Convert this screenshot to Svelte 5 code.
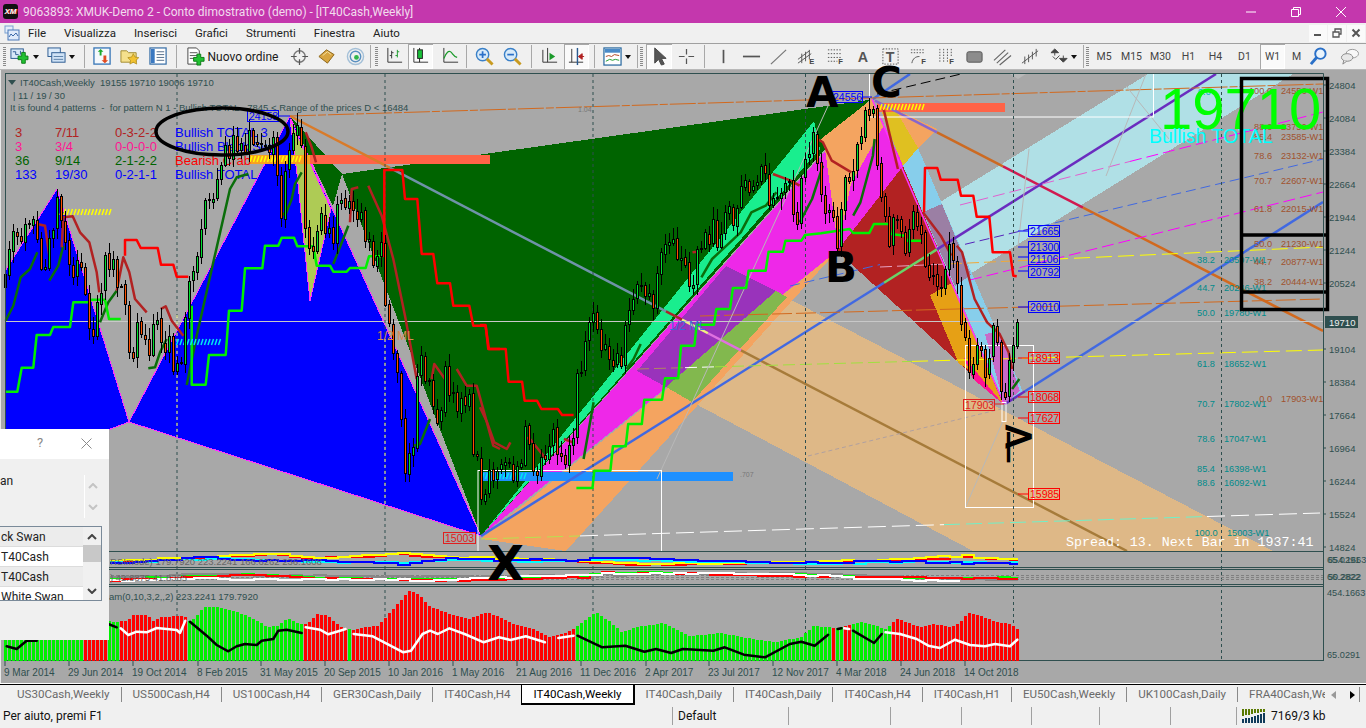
<script>
  const z8 = (a) => a.map(([x, y]) => [x / 3, 110 + y / 3]);
  const z9 = (a) => a.map(([x, y]) => [480 + x / 2.8, 90 + y / 3]);
  const z10 = (a) => a.map(([x, y]) => [800 + x / 3, 70 + y / 3]);
  const z11 = (a) => a.map(([x, y]) => [x / 3, 560 + y / 3]);
  const z7 = (a) => a.map(([x, y]) => [300 + x / 2.613, 540 + y / 3]);
  const z6 = (a) => a.map(([x, y]) => [900 + x / 3, 540 + y / 3]);
  const P = (a) => a.map((p) => p[0].toFixed(1) + ',' + p[1].toFixed(1)).join(' ');
  const lerp = (tab, x) => {
    if (x <= tab[0][0]) return tab[0][1];
    for (let i = 1; i < tab.length; i++) {
      if (x <= tab[i][0]) {
        const [a, b] = tab[i - 1], [c, d] = tab[i];
        return b + ((d - b) * (x - a)) / (c - a);
      }
    }
    return tab[tab.length - 1][1];
  };
  let seed = 77;
  const rnd = () => ((seed = (seed * 16807) % 2147483647) / 2147483647);
  const stepify = (p) => {
    const out = [];
    const end = p[p.length - 1][0];
    for (let x = p[0][0]; x < end; x += 12) {
      const y = Math.round(lerp(p, x) + (rnd() - 0.5) * 1.5);
      out.push([x, y], [Math.min(x + 12, end), y]);
    }
    return out;
  };

  const path = [
    ...z8([[17,540],[50,320],[60,380],[100,370],[125,460],[135,530],[160,320],[172,280],[195,380],[220,460],[250,480],[270,640],[290,640],[315,450],[330,450],[365,550],[378,640],[388,770],[400,710],[412,630],[425,680],[440,700],[448,720],[470,600],[485,680],[497,770],[510,700],[533,800],[545,760],[557,580],[570,540],[592,470],[605,380],[617,310],[640,230],[650,180],[700,90],[760,100],[820,100],[832,240],[845,300],[860,100],[890,90],[905,70],[917,360],[930,440],[950,350],[1000,370],[1020,270],[1060,280],[1085,300],[1110,440],[1135,400],[1145,400],[1157,610],[1170,680],[1193,780],[1205,970],[1217,1080],[1240,990],[1252,840],[1265,740],[1290,830],[1312,950],[1337,780],[1360,890],[1385,910],[1408,850],[1420,990],[1432,1040],[1445,1190]]),
    [487,490],[501,457],[516,480],[526,440],[534,480],[548,443],[557,440],[566,470],[573,447],[577,383],[582,357],[586,340],[594,323],[601,337],[614,360],[621,373],[626,327],[634,303],[641,287],[646,287],[653,320],[657,290],[661,240],[669,233],[677,267],[685,267],[694,280],[701,240],[709,253],[713,223],[717,243],[726,227],[737,207],[744,187],[757,193],[766,170],[773,213],[785,183],[798,220],[805,150],[814,133],[818,162],[821,203],[832,217],[837,240],[844,183],[853,177],[857,157],[866,123],[873,110],[877,147],[882,190],[889,247],[896,207],[905,240],[914,223],[923,240],[929,287],[938,283],[944,277],[950,237],[953,243],[957,283],[961,330],[969,367],[976,343],[985,367],[993,330],[1001,373],[1005,403],[1009,370],[1013,353],[1017,323]
  ];
  const candles = [];
  let prev = lerp(path, 2);
  for (let k = 0; k <= 253; k++) {
    const x = 4 + 4 * k;
    const close = k === 253 ? 323 : lerp(path, x + 1.5) + (rnd() - 0.5) * 30;
    let open = k === 253 ? 347 : prev + (rnd() - 0.5) * 4;
    const top = Math.min(open, close), bot = Math.max(open, close);
    const up = close < open;
    candles.push({ x, y: Math.round(top), h: Math.max(1, Math.round(bot - top)), hi: Math.round(top - 2 - rnd() * 10), lo: Math.round(bot + 2 + rnd() * 10), up });
    prev = close;
  }

  const env = [[0,625],[83,622],[108,622],[113,623],[127,622],[133,616],[147,616],[153,622],[160,618],[180,617],[185,618],[190,623],[204,608],[217,608],[233,612],[250,618],[267,628],[277,627],[287,619],[300,625],[307,625],[317,615],[328,617],[340,628],[353,631],[367,628],[377,627],[383,621],[400,602],[409,592],[418,595],[430,608],[453,616],[468,620],[487,613],[514,625],[530,629],[549,638],[568,633],[577,627],[595,613],[610,623],[621,633],[637,628],[664,624],[690,637],[721,634],[752,640],[775,643],[801,638],[813,627],[836,629],[863,623],[885,630],[897,620],[920,628],[933,625],[950,628],[958,625],[968,614],[977,616],[997,623],[1010,625],[1019,632]];
  const zones = [[83,'g'],[108,'r'],[119,'g'],[187,'r'],[303,'g'],[347,'r'],[352,'g'],[575,'r'],[832,'g'],[836,'r'],[844,'g'],[851,'r'],[889,'g'],[1022,'r']];
  const hist = [];
  for (let k = 0; k <= 253; k++) {
    const x = 4 + 4 * k;
    const y = Math.round(lerp(env, x + 1));
    const z = zones.find((t) => x < t[0]);
    hist.push({ x, y, h: 662 - y, c: z[1] === 'g' ? '#00f000' : '#ff0000' });
  }
  const curves = [
    { c: '#000', p: z11([[20,262],[50,270],[80,245],[110,245]]) },
    { c: '#000', p: z11([[325,195],[350,205]]) },
    { c: '#fff', p: z11([[362,208],[385,228],[410,218],[440,220],[470,207],[530,213],[540,222],[556,185]]) },
    { c: '#000', p: z11([[570,188],[620,230],[650,258],[685,277],[710,262],[735,255],[770,258],[785,245],[820,240],[835,215],[860,212],[905,222]]) },
    { c: '#fff', p: z11([[917,205],[960,212],[985,226],[1010,218],[1037,210]]) },
    { c: '#fff', p: z7([[140,285],[190,292],[270,340],[290,335],[320,285],[340,275],[360,285],[390,268],[430,285],[480,310],[520,295],[550,303],[590,292],[640,310]]) },
    { c: '#fff', p: z7([[675,297],[715,290]]) },
    { c: '#000', p: z7([[725,290],[790,325],[850,320],[900,338],[930,330],[970,342],[1000,330],[1080,335],[1110,325],[1160,347],[1215,355],[1280,315],[1310,308],[1345,320],[1380,287]]) },
    { c: '#000', p: z7([[1405,270],[1415,268]]) },
    { c: '#fff', p: z7([[1422,268],[1435,270]]) },
    { c: '#000', p: z7([[1445,275],[1500,312],[1520,285]]) },
    { c: '#fff', p: z7([[1530,280],[1568,285]]) },
    { c: '#fff', p: z6([[0,285],[50,300],[85,320],[120,327],[165,302],[210,318],[255,322],[285,315],[330,322],[352,302]]) }
  ];

  const darkRed = [
    z8([[112,345],[135,350],[148,440]]), z8([[185,415],[190,325],[218,322],[240,370],[268,400],[290,490],[298,550]]),
    z8([[350,545],[370,445],[388,490],[405,570],[440,610]]), z8([[482,600],[497,592],[515,635],[550,680]]),
    z8([[917,70],[935,115],[948,160]]), z8([[1105,230],[1145,320],[1180,450],[1215,620],[1250,810]]),
    z8([[1295,810],[1303,765],[1335,810]]), z8([[1370,780],[1400,830],[1430,830],[1480,1010],[1500,1020]]),
    z8([[1050,340],[1055,240],[1075,235]]), z9([[0,955],[20,1000],[40,1060],[75,1080],[85,1060]]),
    z9([[125,1045],[140,1050],[185,1110]]), z9([[235,1050],[260,1060]]), z9([[595,490],[610,488]]),
    z9([[820,255],[870,275],[895,290]]), z9([[945,150],[960,160],[985,215],[1040,250]]), z9([[1130,60],[1170,240]]),
    z9([[1240,370],[1290,440],[1320,500]]), z9([[1335,470],[1350,490],[1385,630],[1420,700],[1455,735],[1480,790],[1490,840]])
  ];
  const darkGreen = [
    z8([[17,635],[40,590],[62,505],[90,480],[112,430]]), z8([[148,515],[175,470],[190,410]]), z8([[300,640],[325,580],[350,545]]),
    z8([[445,778],[465,775],[480,730],[500,690]]), z8([[560,828],[590,680],[640,460],[690,240],[710,205],[745,195]]),
    z8([[845,310],[855,320],[875,270],[885,225],[905,190]]), z8([[1000,465],[1045,350]]), z8([[1240,1010],[1260,1005],[1290,930]]),
    z9([[290,1110],[305,1020],[318,940]]), z9([[410,840],[430,810],[450,765]]),
    z9([[620,565],[650,510],[700,460],[730,430],[760,370],[800,350],[830,310]]), z9([[895,400],[930,330],[960,230]]),
    z9([[1045,380],[1065,340],[1100,200],[1105,150]]), z9([[1490,900],[1510,870]])
  ];
  const redSteps = [
    z8([[1153,445],[1153,183],[1207,183],[1215,270],[1252,270],[1265,435],[1300,435],[1312,523],[1350,523],[1360,590],[1408,590],[1420,650],[1457,650],[1465,720],[1500,720]]),
    z9([[0,708],[15,708],[25,780],[72,780],[80,878],[118,878],[125,935],[160,935],[172,960],[218,960],[230,978],[262,978]]),
    z8([[375,440],[375,393],[410,393],[422,417],[473,417],[483,467],[520,467],[530,503],[565,503]]),
    z10([[372,430],[375,297],[412,297],[422,332],[473,332],[483,380],[520,380],[530,443],[568,443],[578,550],[630,550],[640,620],[650,622]])
  ];
  const greenSteps = [
    z8([[15,848],[52,848],[65,776],[100,776],[110,678],[150,678],[160,654],[210,654],[220,580],[265,580],[275,572],[315,572],[327,630],[362,630]]),
    z8([[575,590],[575,827],[617,827],[627,738],[677,738],[687,605],[725,605],[735,478],[787,478],[795,410],[835,410],[845,386],[882,386],[892,412],[940,412],[950,470],[990,470],[1000,488],[1040,488],[1050,477],[1097,477],[1107,442],[1145,442]]),
    z9([[270,1197],[315,1197],[320,1145],[365,1145],[372,1072],[408,1072],[415,1005],[453,1005],[460,932],[510,932],[518,868],[555,868],[563,770],[600,770],[607,707],[655,707],[662,660],[700,660],[708,597],[745,597],[752,545],[800,545],[808,488],[848,488],[855,455],[900,455],[910,438],[955,433],[1035,420],[1045,432],[1090,432],[1103,405],[1145,405],[1150,435],[1190,440],[1195,455],[1235,455]])
  ];

  const hatch = (x1, x2, y, h) => {
    const a = [];
    for (let x = x1; x < x2; x += 3.5) a.push(x);
    return a.map((x) => ({ x, y, h }));
  };

  const fills = [
    { c: '#0000ff', s: '#ff33ff', p: [[5,272],[57,190],[129,423],[5,470]] },
    { c: '#0000ff', s: '#ff33ff', p: [[129,423],[290,117],[481,537]] },
    { c: '#006400', p: [[290,117],[342,175],[333,207],[320,180]] },
    { c: '#006400', p: [[342,175],[869,101],[481,537]] },
    { c: '#aecb55', s: '#ff33ff', p: [[290,120],[297,175],[310,302],[331,210]] },
    { c: '#b0e0e6', p: [[932,208],[1148,75],[1293,75],[957,283]] },
    { c: '#deb887', p: [[726,267],[1273,552],[973,552],[692,403]] },
    { c: '#f4a460', p: [[481,540],[566,552],[837,252]] },
    { c: '#19ee8e', p: [[481,537],[814,122],[820,150]] },
    { c: '#ee28e8', p: [[481,537],[872,100],[905,170],[837,252]] },
    { c: '#f4a460', p: [[821,140],[872,100],[884,126],[851,185],[838,248],[825,150]] },
    { c: '#9933bb', p: [[726,267],[776,292],[666,388],[637,372]] },
    { c: '#82b84e', p: [[776,292],[787,298],[692,403],[666,388]] },
    { c: '#dfc021', p: [[878,104],[900,113],[918,149],[903,167]] },
    { c: '#f4a460', p: [[895,110],[937,130],[918,149]] },
    { c: '#87ceeb', p: [[903,167],[918,149],[1023,393],[1005,405]] },
    { c: '#b22222', p: [[903,167],[837,252],[1004,405],[975,340],[955,290]] },
    { c: '#e6a015', p: [[930,296],[952,284],[1003,405],[972,372],[959,365]] },
    { c: '#ff1493', p: [[963,357],[1003,405],[973,380]] },
    { c: '#9b7fa4', p: [[923,213],[942,205],[971,276],[955,287]] },
    { c: '#c86ac8', p: [[985,335],[1000,332],[1020,392],[1004,405]] }
  ];

  const xAt = (a, b) => (x) => a[1] + ((b[1] - a[1]) * (x - a[0])) / (b[0] - a[0]);
  const seg = (a, b, x1, x2, c, w, d) => {
    const f = xAt(a, b);
    return { x1, y1: f(x1), x2, y2: f(x2), c, w, d };
  };
  const M1 = [[290,117],[1127,552]], M2 = [[872,100],[1323,332]], U1 = [[481,537],[1216,75]];
  const Fb = [[790,287],[1323,160]], Fy = [[637,370],[1323,351]], Fw = [[481,540],[1320,514]];
  const Fm1 = [[960,206],[1323,113]], Fm2 = [[970,281],[1323,193]], Fo = [[290,117],[1323,85]], Fo2 = [[700,317],[1323,300]], Fy2 = [[880,268],[1323,248]];
  const lines = [
    seg(M1[0], M1[1], 290, 390, '#d97b2a', 2.5), seg(M1[0], M1[1], 390, 666, '#6f93a8', 2.5), seg(M1[0], M1[1], 666, 682, '#a52a2a', 2.5),
    seg(M1[0], M1[1], 682, 708, '#f0f080', 2.5), seg(M1[0], M1[1], 708, 741, '#e070e0', 2.5), seg(M1[0], M1[1], 741, 1127, '#a67b3a', 2.5),
    seg(M2[0], M2[1], 875, 937, '#8866cc', 2.5), seg(M2[0], M2[1], 937, 1003, '#cc6a22', 2.5), seg(M2[0], M2[1], 1003, 1083, '#d01a50', 2.5), seg(M2[0], M2[1], 1083, 1323, '#d2691e', 2.5),
    seg(U1[0], U1[1], 481, 884, '#4169e1', 2.5), seg(U1[0], U1[1], 884, 937, '#68d468', 2.5), seg(U1[0], U1[1], 937, 1216, '#6a2cbf', 2.5),
    seg([873,100],[910,75], 873, 910, '#4169e1', 2.5),
    seg([1005,405],[1323,203], 1005, 1025, '#6a2cbf', 2.5), seg([1005,405],[1323,203], 1025, 1323, '#4169e1', 2.5),
    seg(Fb[0], Fb[1], 790, 880, '#4169e1', 1, '10 5'), seg(Fb[0], Fb[1], 965, 1040, '#5522bb', 1, '10 5'), seg(Fb[0], Fb[1], 1040, 1323, '#4169e1', 1, '10 5'),
    seg(Fy[0], Fy[1], 637, 685, '#b08860', 1, '12 5'), seg(Fy[0], Fy[1], 685, 715, '#ffffff', 1, '12 5'), seg(Fy[0], Fy[1], 715, 912, '#a0e040', 1, '12 5'), seg(Fy[0], Fy[1], 912, 1323, '#ffff00', 1, '16 6'),
    seg(Fy2[0], Fy2[1], 880, 950, '#e8a0c0', 1, '12 5'), seg(Fy2[0], Fy2[1], 950, 1030, '#f0a838', 1, '12 5'), seg(Fy2[0], Fy2[1], 1030, 1323, '#ffff00', 1, '16 6'),
    seg(Fw[0], Fw[1], 481, 580, '#b8e050', 1, '16 6'), seg(Fw[0], Fw[1], 580, 944, '#ffffff', 1, '18 6'), seg(Fw[0], Fw[1], 944, 1207, '#70f0c8', 1, '16 6'), seg(Fw[0], Fw[1], 1207, 1320, '#ffffff', 1, '18 6'),
    seg(Fm1[0], Fm1[1], 960, 1130, '#e060d0', 1, '12 5'), seg(Fm1[0], Fm1[1], 1130, 1323, '#ff00ff', 1, '12 5'),
    seg(Fm2[0], Fm2[1], 970, 1323, '#ff00ff', 1, '12 5'),
    seg(Fo[0], Fo[1], 290, 1323, '#d2691e', 1, '26 2 8 2'),
    seg(Fo2[0], Fo2[1], 700, 1323, '#d2691e', 1, '20 4'),
    seg([877,95],[961,75], 877, 961, '#000', 1, '10 5'),
    seg([828,107],[657,480], 657, 828, '#b8b8b8', 1),
    seg([1146,75],[1106,177], 1106, 1146, '#b8b8b8', 1),
    seg([1029,150],[1018,247], 1018, 1029, '#b8b8b8', 1),
    seg([1126,87],[1169,140], 1126, 1169, '#b8b8b8', 1),
    seg([1003,422],[966,507], 966, 1003, '#b8b8b8', 1),
    seg([808,457],[1001,410], 808, 1001, '#b0a0a0', 1, '4 3')
  ];

  const blueLabels = [[21665,226,232],[21300,242,248],[21106,254,258],[20792,267,272],[20010,302,308]];
  const redLabels = [[18913,353,359],[18068,392,398],[17627,413,419],[15985,489,495]];
  const tealFib = [['38.2','20597-W1',264],['44.7','20246-W1',292],['50.0','19780-W1',317],['61.8','18652-W1',368],['70.7','17802-W1',408],['78.6','17047-W1',443],['85.4','16398-W1',473],['88.6','16092-W1',487],['100.0','15003-W1',537]];
  const brownFib = [['100.0','24556-W1',95],['88.6','23750-W1',131],['85.4','23585-W1',141],['78.6','23132-W1',160],['70.7','22607-W1',185],['61.8','22015-W1',213],['50.0','21230-W1',248],['44.7','20877-W1',266],['38.2','20444-W1',286],['0.0','17903-W1',403]];
  const ticks = [[24804,86],[24084,119],[23384,152],[22664,185],[21944,218],[21244,251],[20524,284],[19104,350],[18384,383],[17664,416],[16964,449],[16244,482],[15524,515],[14824,548]];
  const vlines = [177, 385, 593, 805.5, 1013.5, 1221.5];
  const dates = [['9 Mar 2014',4],['29 Jun 2014',68],['19 Oct 2014',132],['8 Feb 2015',197],['31 May 2015',260],['20 Sep 2015',324],['10 Jan 2016',388],['1 May 2016',452],['21 Aug 2016',516],['11 Dec 2016',580],['2 Apr 2017',645],['23 Jul 2017',708],['12 Nov 2017',772],['4 Mar 2018',836],['24 Jun 2018',900],['14 Oct 2018',964]];
  const table = [
    ['3', '7/11', '0-3-2-2', 'Bullish TOTAL 3', 138, '#b22222', '#0000ff'],
    ['3', '3/4', '0-0-0-0', 'Bullish Black Swan', 152, '#ff1493', '#0000ff'],
    ['36', '9/14', '2-1-2-2', 'Bearish Crab', 166, '#006400', '#ff0000'],
    ['133', '19/30', '0-2-1-1', 'Bullish TOTAL', 180, '#0000ff', '#0000ff']
  ];
  const rsi = [
    { c: '#ff0000', p: [[110,563],[180,560],[230,557],[270,555],[300,560],[330,559],[400,555],[450,560],[490,560],[580,563],[640,566],[700,565],[800,564],[900,561],[960,558],[1018,562]] },
    { c: '#ffff00', p: [[110,562],[180,559],[230,556],[270,554],[300,559],[330,558],[400,554],[450,559],[490,559],[580,562],[640,565],[700,564],[800,563],[900,560],[960,557],[1018,561]] },
    { c: '#00ffff', p: [[110,564],[200,560],[250,560],[300,563],[400,564],[440,561],[490,562],[580,562],[600,560],[700,563],[800,565],[900,563],[1018,564]] },
    { c: '#0000ff', p: [[110,565],[200,558],[250,562],[300,561],[400,565],[440,559],[490,561],[580,561],[600,558],[700,562],[800,564],[900,562],[960,564],[1018,565]] }
  ].map((l) => ({ ...l, p: stepify(l.p) }));
  const p2 = [
    { c: '#888888', p: [[110,578],[200,575],[300,577],[400,578],[600,576],[800,574],[1018,582]] },
    { c: '#00ff00', p: [[110,580],[200,577],[250,575],[300,578],[400,580],[490,580],[580,577],[600,573],[700,574],[800,576],[900,579],[1018,579]] },
    { c: '#ff0000', p: [[110,581],[200,578],[250,576],[300,579],[400,581],[490,581],[580,578],[600,574],[700,575],[800,577],[900,578],[1018,580]] },
    { c: '#ffffff', p: [[110,582],[170,580],[430,581],[470,579],[600,575],[660,574],[820,576],[860,580],[960,582]] }
  ].map((l) => ({ ...l, p: stepify(l.p) }));

  const menu = ['File', 'Visualizza', 'Inserisci', 'Grafici', 'Strumenti', 'Finestra', 'Aiuto'];
  const tabs = ['US30Cash,Weekly', 'US500Cash,H4', 'US100Cash,H4', 'GER30Cash,Daily', 'IT40Cash,H4', 'IT40Cash,Weekly', 'IT40Cash,Daily', 'IT40Cash,Daily', 'IT40Cash,H4', 'IT40Cash,H1', 'EU50Cash,Weekly', 'UK100Cash,Daily', 'FRA40Cash,Weekly'];
  const cells = [[673,'Per aiuto, premi F1'],[116,'Default'],[102,''],[71,''],[70,''],[68,''],[71,''],[66,'']];

  const tools = [
    { x: 3, w: 3, k: 'grip' }, { x: 10, w: 19, k: 'newchart' }, { x: 33, w: 6, k: 'drop' }, { x: 47, w: 19, k: 'profile' }, { x: 69, w: 6, k: 'drop' },
    { x: 84, w: 1, k: 'sep' }, { x: 93, w: 19, k: 'market' }, { x: 120, w: 19, k: 'fav' }, { x: 149, w: 19, k: 'nav' }, { x: 176, w: 1, k: 'sep' },
    { x: 186, w: 19, k: 'order' }, { x: 206, w: 74, k: 'text', t: 'Nuovo ordine' }, { x: 290, w: 19, k: 'target' }, { x: 317, w: 19, k: 'gold' }, { x: 346, w: 19, k: 'signal' },
    { x: 370, w: 1, k: 'sep' }, { x: 375, w: 3, k: 'grip' }, { x: 385, w: 19, k: 'bars' }, { x: 408, w: 25, k: 'candle', on: 1 }, { x: 441, w: 19, k: 'line' },
    { x: 466, w: 1, k: 'sep' }, { x: 475, w: 19, k: 'zin' }, { x: 503, w: 19, k: 'zout' }, { x: 531, w: 1, k: 'sep' }, { x: 540, w: 19, k: 'auto' }, { x: 564, w: 25, k: 'shift', on: 1 },
    { x: 594, w: 1, k: 'sep' }, { x: 603, w: 19, k: 'ind' }, { x: 625, w: 6, k: 'drop' }, { x: 637, w: 1, k: 'sep' }, { x: 640, w: 3, k: 'grip' }, { x: 646, w: 26, k: 'cursor', on: 1 },
    { x: 677, w: 19, k: 'cross' }, { x: 704, w: 1, k: 'sep' }, { x: 714, w: 19, k: 'vl' }, { x: 742, w: 19, k: 'hl' }, { x: 769, w: 19, k: 'tl' }, { x: 797, w: 19, k: 'chE' },
    { x: 826, w: 19, k: 'fibF' }, { x: 853, w: 19, k: 'A' }, { x: 881, w: 19, k: 'T' }, { x: 909, w: 19, k: 'arcF' }, { x: 937, w: 19, k: 'gridF' }, { x: 965, w: 19, k: 'rect' },
    { x: 993, w: 19, k: 'hatch' }, { x: 1021, w: 19, k: 'pitch' }, { x: 1050, w: 19, k: 'arrows' }, { x: 1071, w: 6, k: 'drop' }, { x: 1083, w: 1, k: 'sep' }, { x: 1086, w: 3, k: 'grip' },
    { x: 1097, w: 14, k: 'tf', t: 'M5' }, { x: 1122, w: 19, k: 'tf', t: 'M15' }, { x: 1151, w: 19, k: 'tf', t: 'M30' }, { x: 1182, w: 13, k: 'tf', t: 'H1' }, { x: 1208, w: 15, k: 'tf', t: 'H4' },
    { x: 1238, w: 13, k: 'tf', t: 'D1' }, { x: 1260, w: 25, k: 'tf', t: 'W1', on: 1 }, { x: 1292, w: 9, k: 'tf', t: 'M' }, { x: 1309, w: 19, k: 'search' }, { x: 1340, w: 19, k: 'chat' }
  ].map((t, i, a) => ({ ...t, ml: i ? t.x - a[i - 1].x - a[i - 1].w : t.x }));
</script>

{#snippet icon(k)}
  <svg class="ic" viewBox="0 0 20 20" aria-hidden="true">
    {#if k === 'newchart'}
      <rect x="1" y="2" width="13" height="10" fill="#d8e8f8" stroke="#2a5a90"/><path d="M3 5h3v3h3M11 4v4" stroke="#2a5a90" fill="none"/><path d="M10 9h4v-4h4v4h3v4h-3v4h-4v-4h-4z" transform="translate(-1 1) scale(.95)" fill="#22c033" stroke="#0a7a14"/>
    {:else if k === 'profile'}
      <rect x="1" y="1" width="13" height="9" fill="#dcebfa" stroke="#2a5a90"/><rect x="5" y="6" width="14" height="10" fill="#cfe2f6" stroke="#2a5a90"/><path d="M7 10h10M7 13h10" stroke="#5a80a8"/>
    {:else if k === 'market'}
      <rect x="1" y="1" width="17" height="17" fill="#f4f8fc" stroke="#3a78b8" stroke-width="1.4"/><path d="M7 9V5H5l3-3 3 3H9v4z" fill="#1aa82a"/><path d="M11 9v5h-2l3.500 3 3.500-3h-2V9z" fill="#e04a20"/>
    {:else if k === 'fav'}
      <path d="M1 4h6l2 2h8v10H1z" fill="#f5e08c" stroke="#a08a30"/><path d="M14 7l1.800 3.600 4 .6-2.900 2.800.7 4-3.600-1.900-3.600 1.900.7-4-2.900-2.800 4-.6z" fill="#f2c232" stroke="#a68414" stroke-width=".7"/>
    {:else if k === 'nav'}
      <rect x="1" y="1" width="17" height="17" fill="#fff" stroke="#3a70a8" stroke-width="1.300"/><rect x="2" y="2" width="4" height="15" fill="#3a78c0"/><path d="M8 5h8M8 8h8M8 11h8M8 14h8" stroke="#506a88"/>
    {:else if k === 'order'}
      <path d="M2 1h9l3 3v14H2z" fill="#fff" stroke="#444"/><path d="M4 6h8M4 9h8M4 12h5" stroke="#555"/><path d="M8 11h3.500V7.500h4V11H19v4h-3.500v4h-4v-4H8z" fill="#22c033" stroke="#0a7a14"/>
    {:else if k === 'target'}
      <circle cx="10" cy="10" r="6" fill="none" stroke="#777" stroke-width="1.500"/><path d="M10 1v6M10 13v6M1 10h6M13 10h6" stroke="#555" stroke-width="1.300"/>
    {:else if k === 'gold'}
      <path d="M2 10l8-7 8 5-7 9z" fill="#d7a440" stroke="#8a6418"/><path d="M6 9l5-4 4 3" stroke="#f4e0a0" fill="none"/>
    {:else if k === 'signal'}
      <circle cx="10" cy="10" r="8.500" fill="none" stroke="#a4c0d8" stroke-width="1.500"/><circle cx="10" cy="10" r="5.500" fill="none" stroke="#5a90c0" stroke-width="1.500"/><circle cx="11" cy="11" r="2.500" fill="#2fb54a"/>
    {:else if k === 'bars'}
      <path d="M3 1v15h15M7 4v8M5 9h2M7 6h2" stroke="#333" fill="none"/><path d="M13 3v8M11 9h2M13 5h2" stroke="#1a9a2a" fill="none"/>
    {:else if k === 'candle'}
      <path d="M3 1v15h15" stroke="#333" fill="none"/><path d="M9 1v15" stroke="#222"/><rect x="7" y="3" width="5" height="9" fill="#18c038" stroke="#222"/>
    {:else if k === 'line'}
      <path d="M3 1v15h15" stroke="#333" fill="none"/><path d="M3 12c3-7 5-8 7-7s3 5 7 6" stroke="#1a9a2a" fill="none" stroke-width="1.300"/>
    {:else if k === 'zin' || k === 'zout'}
      <circle cx="8" cy="8" r="6.500" fill="#d8eaf8" stroke="#3a80c8" stroke-width="1.500"/><path d="M12.500 12.500l6 6" stroke="#c89a20" stroke-width="3"/><path d={k === 'zin' ? 'M4.500 8h7M8 4.500v7' : 'M4.500 8h7'} stroke="#2a70c8" stroke-width="1.800"/>
    {:else if k === 'auto'}
      <path d="M3 3v13h15M8 1v15" stroke="#333" fill="none"/><path d="M10 6l6 4-6 4z" fill="#1a9a2a"/>
    {:else if k === 'shift'}
      <path d="M2 16h15M5 2v14" stroke="#333" fill="none"/><path d="M11 1v18" stroke="#2a5a90" stroke-width="1.500"/><path d="M18 10h-4M12 10l4-3v6z" fill="#b02020" stroke="#b02020"/>
    {:else if k === 'ind'}
      <rect x="1" y="1" width="18" height="18" fill="#fff" stroke="#2a6aa0" stroke-width="1.300"/><rect x="2" y="2" width="16" height="4" fill="#4a8ac8"/><path d="M3 10l3-1 3 1 3-2 5 1" stroke="#b04020" fill="none"/><path d="M3 15l4-2 3 1 3-1 4 1" stroke="#1a9a2a" fill="none"/>
    {:else if k === 'cursor'}
      <path d="M5 1v16l4-4 3 6 3-1-3-6h5z" fill="#555" stroke="#444"/>
    {:else if k === 'cross'}
      <path d="M10 2v6M10 12v6M2 10h6M12 10h6" stroke="#555" stroke-width="1.300"/>
    {:else if k === 'vl'}
      <path d="M10 3v14" stroke="#555" stroke-width="1.800"/>
    {:else if k === 'hl'}
      <path d="M1 10h18" stroke="#555" stroke-width="1.800"/>
    {:else if k === 'tl'}
      <path d="M2 18L18 3" stroke="#777" stroke-width="1.300"/>
    {:else if k === 'chE'}
      <path d="M1 13L13 4M1 17L15 7M5 7v10M9 5v10M13 3v10" stroke="#555" fill="none"/><text class="ict" x="13" y="18">E</text>
    {:else if k === 'fibF'}
      <path d="M2 3h15M2 7h15M2 11h15M2 15h10" stroke="#555" stroke-dasharray="1.500 1.500"/><text class="ict" x="13" y="18">F</text>
    {:else if k === 'A'}
      <text class="ica" x="5" y="16">A</text>
    {:else if k === 'T'}
      <path d="M2 2h16v16H2z" fill="none" stroke="#555" stroke-dasharray="1.500 1.500"/><text class="ica" x="5" y="15.500">T</text>
    {:else if k === 'arcF'}
      <path d="M2 3h15M2 6h15" stroke="#555" stroke-dasharray="1.500 1.500"/><path d="M3 17c1-5 4-7 8-7" stroke="#555" fill="none"/><text class="ict" x="13" y="18">F</text>
    {:else if k === 'gridF'}
      <path d="M3 2v14M7 2v14M11 2v14M15 2v9" stroke="#555" stroke-dasharray="1.500 1.500"/><text class="ict" x="13" y="18">F</text>
    {:else if k === 'rect'}
      <rect x="2" y="5" width="16" height="11" rx="2" fill="#8c8c8c" stroke="#555"/>
    {:else if k === 'hatch'}
      <path d="M1 14L13 3M4 17L16 6M7 19L19 9" stroke="#666" stroke-width="1.200"/>
    {:else if k === 'pitch'}
      <path d="M1 17L18 4M4 10v8M8 8v8M12 5v8M16 2v8" stroke="#555" fill="none"/>
    {:else if k === 'arrows'}
      <path d="M5 2l4 4H1zM5 6v3" fill="#444" stroke="#444"/><path d="M14 16l-4-4h8zM14 12v-3" fill="#444" stroke="#444"/><path d="M3 10l3 3 4-4" stroke="#444" fill="none"/>
    {:else if k === 'search'}
      <circle cx="12" cy="7" r="5.500" fill="#eaf4fc" stroke="#2a70c8" stroke-width="2"/><path d="M8 11l-6 7" stroke="#2a70c8" stroke-width="3"/>
    {:else if k === 'chat'}
      <ellipse cx="13" cy="7" rx="6.500" ry="4.500" fill="#f8f8f8" stroke="#999"/><ellipse cx="7.500" cy="11" rx="6" ry="4" fill="#e8e8e8" stroke="#888"/><path d="M4 14l-1 4 4-3" fill="#e8e8e8" stroke="#888"/>
    {/if}
  </svg>
{/snippet}

<div class="app">
  <header class="title">
    <div class="logo"><span>XM</span></div>
    <div class="ttext">9063893: XMUK-Demo 2 - Conto dimostrativo (demo) - [IT40Cash,Weekly]</div>
    <div class="wbtns">
      <svg width="10" height="10" viewBox="0 0 10 10"><path d="M0 5h10" stroke="#fff"/></svg>
      <svg width="10" height="10" viewBox="0 0 10 10"><path d="M.5 2.500h7v7h-7zM2.500 2.500v-2h7v7h-2" fill="none" stroke="#fff"/></svg>
      <svg width="10" height="10" viewBox="0 0 10 10"><path d="M0 0l10 10M10 0L0 10" stroke="#fff"/></svg>
    </div>
  </header>

  <nav class="menu">
    <svg class="micon" viewBox="0 0 16 16"><rect x="1" y="1" width="8" height="7" fill="#e4eefa" stroke="#7aa0d0"/><rect x="4" y="5" width="11" height="10" fill="#dfeafa" stroke="#4a78b8"/><path d="M5 12l2-3 2 2 3-3 2 3" fill="none" stroke="#3a68a8"/></svg>
    {#each menu as m}<span>{m}</span>{/each}
    <div class="mdi">
      <button aria-label="Riduci"><svg width="10" height="10" viewBox="0 0 10 10"><path d="M1 7h7" stroke="#555" stroke-width="2"/></svg></button>
      <button aria-label="Ripristina"><svg width="10" height="10" viewBox="0 0 10 10"><path d="M1 4h6v5H1zM3 4V1h6v5H7" fill="none" stroke="#555" stroke-width="1.300"/></svg></button>
      <button aria-label="Chiudi"><svg width="10" height="10" viewBox="0 0 10 10"><path d="M1.500 1.500l7 7M8.500 1.500l-7 7" stroke="#555" stroke-width="2"/></svg></button>
    </div>
  </nav>

  <div class="tools">
    {#each tools as t}
      <div class="tool" class:on={t.on} class:sep={t.k === 'sep'} class:grip={t.k === 'grip'} class:drop={t.k === 'drop'} class:lbl={t.k === 'text'} class:tf={t.k === 'tf'} style="margin-left:{t.ml}px;width:{t.w}px">
        {#if t.k === 'text' || t.k === 'tf'}{t.t}{:else if t.k !== 'sep' && t.k !== 'grip' && t.k !== 'drop'}{@render icon(t.k)}{/if}
      </div>
    {/each}
  </div>

  <main class="chart">
    <svg class="plot" width="1366" height="614" viewBox="0 71 1366 614">
      <defs>
        <clipPath id="main"><rect x="6" y="75" width="1317" height="477"/></clipPath>
      </defs>
      <rect x="0" y="71" width="1366" height="614" fill="#a8a8a8"/>
      <rect x="0" y="71" width="1" height="614" fill="#e8e8e8"/>
      <g clip-path="url(#main)">
        <path d="M1010 75h16l-8 5z" fill="#b8b8b8"/>
        {#each fills as f}<polygon class="poly" points={P(f.p)} fill={f.c} stroke={f.s || 'none'}/>{/each}
        <path d="M872 100L1004 405" stroke="#ff33ff" stroke-width="1.500"/>
        <rect x="250" y="156" width="60" height="9" fill="#f8a020"/>
        <rect x="310" y="156" width="180" height="9" fill="#ff6347"/>
        <rect x="877" y="104" width="128" height="9" fill="#ff6347"/>
        <rect x="480" y="473" width="253" height="9" fill="#1e90ff"/>
        {#each lines as l}<line x1={l.x1} y1={l.y1} x2={l.x2} y2={l.y2} stroke={l.c} stroke-width={l.w} stroke-dasharray={l.d}/>{/each}
        <rect x="869.500" y="70" width="284" height="48" fill="none" stroke="#fff"/>
        <rect x="478" y="471.500" width="183.500" height="90" fill="none" stroke="#fff"/>
        <rect x="965.500" y="346.500" width="68" height="162" fill="none" stroke="#fff"/>
        <rect x="1002" y="403.500" width="4" height="19" fill="none" stroke="#fff"/>
      </g>
      <line x1="5" y1="322.500" x2="1323" y2="322.500" stroke="#c8c8c8"/>
      {#each vlines as x}<line x1={x} y1="75" x2={x} y2="662" stroke="#2f4f4f" stroke-dasharray="3 3"/>{/each}
      <line x1="177" y1="316" x2="177" y2="438" stroke="#ffff99" stroke-dasharray="3 3"/>
      <line x1="385" y1="340" x2="385" y2="505" stroke="#ffff99" stroke-dasharray="3 3"/>

      <g class="tx9">
        <path d="M8 81h8l-4 5z" fill="#2f4f4f"/>
        <text class="ax" x="20" y="87">IT40Cash,Weekly  19155 19710 19006 19710</text>
        <text class="ax" x="13" y="100">| 11 / 19 / 30</text>
        <text class="ax" x="10" y="112">It is found 4 patterns  -  for pattern N 1 - Bullish TOTAL - 7845 &lt; Range of the prices D &lt; 16484</text>
      </g>
      {#each table as r}
        <g class="tbl" fill={r[5]}>
          <text x="15" y={r[4]}>{r[0]}</text>
          <text x="55" y={r[4]}>{r[1]}</text>
          <text x="115" y={r[4]}>{r[2]}</text>
          <text x="175" y={r[4]} fill={r[6]}>{r[3]}</text>
        </g>
      {/each}

      {#each darkGreen as c}<polyline points={P(c)} class="crv" stroke="#0a6e0a"/>{/each}
      {#each darkRed as c}<polyline points={P(c)} class="crv" stroke="#b22222"/>{/each}
      {#each redSteps as c}<polyline points={P(c)} class="crv" stroke="#ff0000"/>{/each}
      {#each greenSteps as c}<polyline points={P(c)} class="crv" stroke="#00f000"/>{/each}

      {#each hatch(60, 112, 213, 5) as h}<path d="M{h.x} {h.y + 3}l2-6" stroke="#ffff00" stroke-width="1.500"/>{/each}
      {#each hatch(173, 222, 343, 5) as h}<path d="M{h.x} {h.y + 3}l2-6" stroke="#00e8f0" stroke-width="1.500"/>{/each}
      {#each hatch(250, 300, 160, 5) as h}<path d="M{h.x} {h.y + 3}l2-6" stroke="#ffff00" stroke-width="1.500"/>{/each}
      {#each hatch(880, 924, 108, 5) as h}<path d="M{h.x} {h.y + 3}l2-6" stroke="#ffff00" stroke-width="1.500"/>{/each}
      {#each hatch(482, 526, 477, 5) as h}<path d="M{h.x} {h.y + 3}l2-6" stroke="#00e8f0" stroke-width="1.500"/>{/each}

      <g class="cnd">
        {#each candles as c}
          <line x1={c.x + 1.500} y1={c.hi} x2={c.x + 1.500} y2={c.lo} stroke="#000"/>
          <rect x={c.x + 0.500} y={c.y + 0.500} width="2" height={c.h} fill={c.up ? '#00e030' : '#ff5000'} stroke="#000"/>
        {/each}
      </g>

      <text class="ml" x="377" y="341" fill="#d98a50">1/2 ML</text>
      <text class="ml" x="669" y="331" fill="#3a6cd9">1/2 ML</text>
      <text class="tiny" x="578" y="113">1.04</text>
      <text class="tiny" x="740" y="478">.707</text>

      {#each blueLabels as l}
        <line x1="1018" y1={l[2]} x2="1028" y2={l[2]} stroke="#0000ff"/>
        <rect class="lb" x="1028.500" y={l[1] + 0.500} width="31" height="11" stroke="#0000ff"/>
        <text class="lbt" x="1030" y={l[1] + 10} fill="#0000ff">{l[0]}</text>
      {/each}
      {#each redLabels as l}
        <line x1="1018" y1={l[2]} x2="1028" y2={l[2]} stroke="#ff0000"/>
        <rect class="lb" x="1028.500" y={l[1] + 0.500} width="31" height="11" stroke="#ff0000"/>
        <text class="lbt" x="1030" y={l[1] + 10} fill="#ff0000">{l[0]}</text>
      {/each}
      <rect class="lb" x="963.500" y="400.500" width="31" height="11" stroke="#e02020"/>
      <text class="lbt" x="965" y="410" fill="#e02020">17903</text>
      <line x1="995" y1="405" x2="1004" y2="405" stroke="#e02020"/>
      <rect class="lb" x="443.500" y="533.500" width="32" height="11" stroke="#e02020"/>
      <text class="lbt" x="445" y="543" fill="#e02020">15003</text>
      <rect class="lb" x="247.500" y="111.500" width="31" height="11" stroke="#0000ff"/>
      <text class="lbt" x="249" y="121" fill="#0000ff">24158</text>
      <line x1="279" y1="117" x2="290" y2="117" stroke="#0000ff"/>
      <rect class="lb" x="831.500" y="92.500" width="31" height="11" stroke="#0000ff"/>
      <text class="lbt" x="833" y="102" fill="#0000ff">24556</text>
      <line x1="863" y1="98" x2="872" y2="98" stroke="#0000ff"/>

      {#each tealFib as f}
        <text class="fib" x="1206" y={f[2]} text-anchor="middle" fill="#008b8b">{f[0]}</text>
        <text class="fib" x={f[0] === '100.0' ? 1227 : 1224} y={f[2]} fill="#008b8b">{f[1]}</text>
      {/each}
      <text class="fib" x="1198" y="96" fill="#00b0c0">0.0</text>
      {#each brownFib as f}
        <text class="fib" x="1272" y={f[2]} text-anchor="end" fill="#a0522d">{f[0]}</text>
        <text class="fib" x="1281" y={f[2]} fill="#a0522d">{f[1]}</text>
      {/each}

      <text class="big" x="1160" y="130">19710</text>
      <text class="sig" x="1149" y="144">Bullish TOTAL</text>
      <text class="spread" x="1066" y="547">Spread: 13. Next Bar in 1937:41</text>

      <rect x="1241.500" y="79.500" width="86" height="231" class="ink"/>
      <path d="M1241 236h86M1241 293h86" class="ink"/>
      <ellipse cx="222" cy="132.500" rx="66" ry="23.500" class="ink"/>

      <path d="M5 74.500h1318.500v477.500M5.500 74v588" fill="none" stroke="#2f4f4f"/>
      <path d="M5 552.500h1319M5 568.500h1319M5 570.500h1319M5 585.500h1319M5 587.500h1319M5 661.500h1319M1323.500 552v110" fill="none" stroke="#2f4f4f"/>
      {#each ticks as t}
        <line x1="1323" y1={t[1]} x2="1326" y2={t[1]} stroke="#2f4f4f"/>
        <text class="ax" x="1329" y={t[1] + 3.500}>{t[0]}</text>
      {/each}
      <rect x="1325" y="317" width="33" height="12" fill="#2f4f4f"/>
      <text class="ax pr" x="1329" y="326.500">19710</text>

      {#each rsi as l}<polyline class="thin" points={P(l.p)} stroke={l.c}/>{/each}
      <path d="M6 576.500h1317M6 578.500h1317M6 580.500h1317" stroke="#808080" stroke-dasharray="3 2"/>
      {#each p2 as l}<polyline class="thin" points={P(l.p)} stroke={l.c}/>{/each}

      <text class="ax gr" x="110" y="566">RSImode) 179.7920 223.2241 166.6262 236.1608</text>
      <text class="ax gr" x="110" y="582">) 42.8875 41.8365</text>
      <text class="ax" x="109" y="601">am(0,10,3,2,,2) 223.2241 179.7920</text>
      <text class="ax pv" x="1327" y="564">65.0291</text>
      <text class="ax pv" x="1328" y="564">654.1663</text>
      <text class="ax pv" x="1327" y="581">66.2822</text>
      <text class="ax pv" x="1328" y="581">50.2822</text>
      <text class="ax pv" x="1327" y="597">454.1663</text>
      <text class="ax pv" x="1327" y="659">65.0291</text>

      <g class="hist">
        {#each hist as b}<rect x={b.x} y={b.y} width="3" height={b.h} fill={b.c}/>{/each}
      </g>
      {#each curves as c}<polyline class="hcv" points={P(c.p)} stroke={c.c}/>{/each}

      {#each dates as d}
        <line x1={d[1] + 1} y1="662" x2={d[1] + 1} y2="667" stroke="#2f4f4f"/>
        <text class="ax dt" x={d[1]} y="677">{d[0]}</text>
      {/each}
      <rect x="0" y="684" width="1366" height="1" fill="#fff"/>

      <text class="hand" x="806" y="108">A</text>
      <text class="hand" x="871" y="98">C</text>
      <text class="hand" x="825" y="283">B</text>
      <text class="hand hx" x="487" y="581">X</text>
      <text class="hand" x="1001" y="451">&gt;</text>
      <text class="hand hl2" x="1003" y="456">|</text>
    </svg>

    <aside class="dlg">
      <div class="dhead"><span class="q">?</span>
        <svg width="11" height="11" viewBox="0 0 11 11"><path d="M.5.500l10 10M10.500.500l-10 10" stroke="#8a8a8a"/></svg>
      </div>
      <div class="dbody">
        <span class="an">an</span>
        <div class="spin">
          <svg width="10" height="6" viewBox="0 0 10 6"><path d="M1 5l4-4 4 4" fill="none" stroke="#c4c4c4" stroke-width="2"/></svg>
          <svg width="10" height="6" viewBox="0 0 10 6"><path d="M1 1l4 4 4-4" fill="none" stroke="#c4c4c4" stroke-width="2"/></svg>
        </div>
        <div class="list">
          <div class="rows">
            <div class="row alt">ck Swan</div>
            <div class="row">T40Cash</div>
            <div class="row alt">T40Cash</div>
            <div class="row">White Swan</div>
          </div>
          <div class="sb">
            <svg width="10" height="6" viewBox="0 0 10 6"><path d="M1 5l4-4 4 4" fill="none" stroke="#444" stroke-width="2"/></svg>
            <div class="thumb"></div>
            <svg class="dn" width="10" height="6" viewBox="0 0 10 6"><path d="M1 1l4 4 4-4" fill="none" stroke="#444" stroke-width="2"/></svg>
          </div>
        </div>
      </div>
    </aside>
  </main>

  <div class="tabs">
    {#each tabs as t, i}<div class="tab" class:active={i === 5}>{t}</div>{/each}
    <div class="tarrows">
      <svg width="6" height="8" viewBox="0 0 6 8"><path d="M5 0v8L0 4z" fill="#999"/></svg>
      <svg width="6" height="8" viewBox="0 0 6 8"><path d="M0 0v8l5-4z" fill="#000"/></svg>
    </div>
  </div>

  <footer class="status">
    {#each cells as c}<div class="cell" style="width:{c[0]}px">{c[1]}</div>{/each}
    <div class="net">
      <svg width="24" height="14" viewBox="0 0 24 14"><g fill="#5a7a00"><rect x="0" y="0" width="2" height="7"/><rect x="3" y="0" width="2" height="6"/><rect x="6" y="0" width="2" height="6"/><rect x="9" y="0" width="2" height="5"/><rect x="12" y="0" width="2" height="4"/><rect x="15" y="0" width="2" height="4"/><rect x="18" y="0" width="2" height="3"/><rect x="21" y="0" width="2" height="3"/></g><g fill="#103a5a"><rect x="0" y="10" width="2" height="4"/><rect x="3" y="9" width="2" height="5"/><rect x="6" y="9" width="2" height="5"/><rect x="9" y="8" width="2" height="6"/><rect x="12" y="7" width="2" height="7"/><rect x="15" y="6" width="2" height="8"/><rect x="18" y="5" width="2" height="9"/><rect x="21" y="4" width="2" height="10"/></g></svg>
      <span>7169/3 kb</span>
    </div>
  </footer>
</div>

<style>
  :global(body) { margin: 0; background: #f0f0f0; overflow: hidden; }
  .app { width: 1366px; height: 728px; display: flex; flex-direction: column; overflow: hidden; font-family: Roboto, "Liberation Sans", sans-serif; font-size: 12px; color: #222; }

  .title { height: 23px; flex: none; background: #c437ad; display: flex; align-items: center; }
  .logo { width: 15px; height: 15px; margin-left: 3px; background: #111; border-radius: 3px; display: flex; align-items: center; justify-content: center; }
  .logo span { font: italic bold 8px "Liberation Sans", sans-serif; color: #fff; text-shadow: 1px 0 0 #d02020; }
  .ttext { margin-left: 5px; color: #f2dcee; font-size: 12px; white-space: nowrap; }
  .wbtns { margin-left: auto; display: flex; align-items: center; gap: 35px; padding-right: 20px; }

  .menu { height: 20px; flex: none; background: #f0f0f0; display: flex; align-items: center; gap: 18px; font-size: 11.500px; }
  .micon { width: 16px; height: 16px; margin: 0 -10px 0 4px; }
  .menu span { white-space: nowrap; color: #222; }
  .mdi { margin-left: auto; display: flex; gap: 1px; padding-right: 1px; }
  .mdi button { width: 18px; height: 17px; padding: 0; border: 0; background: #fafafa; display: flex; align-items: center; justify-content: center; }

  .tools { height: 27px; flex: none; box-sizing: border-box; background: #f0f0f0; border-top: 1px solid #a0a0a0; border-bottom: 1px solid #b8b8b8; display: flex; align-items: center; }
  .tool { flex: none; height: 25px; display: flex; align-items: center; justify-content: center; color: #333; white-space: nowrap; }
  .tool.on { background: #fafafa; box-shadow: inset 1px 1px 0 #a8a8a8, inset -1px -1px 0 #fff; background-image: radial-gradient(#ddd .5px, transparent .5px); background-size: 2px 2px; }
  .tool.sep { background: #a8a8a8; height: 23px; }
  .tool.grip { height: 19px; background: repeating-linear-gradient(#8a8a8a 0 1px, transparent 1px 2px); }
  .tool.drop::after { content: ""; border: 3.500px solid transparent; border-top: 4px solid #111; border-bottom: 0; }
  .tool.lbl { font-size: 12px; color: #1a1a1a; }
  .tool.tf { font-size: 10.500px; color: #444; }
  .ic { width: 19px; height: 19px; display: block; flex: none; overflow: visible; }
  .ict { font: bold 8px "Liberation Sans", sans-serif; fill: #444; }
  .ica { font: bold 15px "Liberation Sans", sans-serif; fill: #555; }

  .chart { height: 614px; flex: none; position: relative; background: #a8a8a8; }
  .plot { display: block; overflow: visible; }
  .poly { shape-rendering: crispEdges; }
  .ax { font: 9.500px "Liberation Sans", sans-serif; fill: #2f4f4f; white-space: pre; }
  .ax.pr { fill: #eee; }
  .ax.gr { fill: #666; }
  .ax.dt { font-size: 10px; }
  .ax.pv { font-size: 9.200px; }
  .tbl text { font: 13px "Liberation Sans", sans-serif; }
  .crv { fill: none; stroke-width: 2.500; stroke-linejoin: round; }
  .thin { fill: none; stroke-width: 1.500; shape-rendering: crispEdges; }
  .hcv { fill: none; stroke-width: 2.500; stroke-linejoin: round; stroke-linecap: round; }
  .cnd line, .cnd rect { shape-rendering: crispEdges; }
  .hist rect { shape-rendering: crispEdges; }
  .lb { fill: none; }
  .lbt { font: 10.500px "Liberation Sans", sans-serif; }
  .fib { font: 9.200px "Liberation Sans", sans-serif; white-space: pre; }
  .ml { font: 12px "Liberation Sans", sans-serif; }
  .tiny { font: 7px "Liberation Sans", sans-serif; fill: #777; }
  .big { font: 58px "Liberation Sans", sans-serif; fill: #00ff00; }
  .sig { font: 19.500px "Liberation Sans", sans-serif; fill: #00ffff; }
  .spread { font: 13.300px "Liberation Mono", monospace; fill: #fff; }
  .ink { fill: none; stroke: #000; stroke-width: 3.500; }
  .hand { font: bold 42px "DejaVu Sans", sans-serif; fill: #000; }
  .hand.hx { font-size: 48px; }
  .hand.hl2 { font-size: 30px; }

  .dlg { position: absolute; left: 0; top: 359px; width: 109px; height: 211px; background: #f0f0f0; }
  .dhead { height: 30px; background: #fff; position: relative; color: #888; }
  .q { position: absolute; left: 37px; top: 6px; font-size: 13px; }
  .dhead svg { position: absolute; left: 81px; top: 9px; }
  .dbody { position: relative; font-size: 12px; color: #222; }
  .an { position: absolute; left: 0; top: 15px; }
  .spin { position: absolute; left: 84px; top: 16px; width: 17px; height: 43px; border-left: 1px solid #fff; box-sizing: border-box; display: flex; flex-direction: column; align-items: center; justify-content: space-around; }
  .list { position: absolute; left: -1px; top: 67px; width: 101px; height: 73px; background: #fff; border: 1px solid #7a8a99; display: flex; overflow: hidden; }
  .rows { width: 83px; flex: none; }
  .row { height: 19px; line-height: 21px; padding-left: 1px; border-bottom: 1px solid #dcdcdc; white-space: nowrap; overflow: hidden; box-sizing: content-box; }
  .row.alt { background: #ececec; }
  .sb { flex: 1; background: #f0f0f0; display: flex; flex-direction: column; align-items: center; padding-top: 7px; }
  .thumb { width: 100%; height: 17px; background: #c8c8c8; margin-top: 5px; }
  .sb .dn { margin-top: 26px; }

  .tabs { height: 21px; flex: none; box-sizing: border-box; background: #f0f0f0; border-top: 1px solid #000; display: flex; position: relative; padding-left: 6px; overflow: hidden; font-size: 11.600px; }
  .tab { padding: 0 11px; color: #6a6a6a; white-space: nowrap; border-right: 1px solid #8a8a8a; margin-top: 2px; height: 15px; line-height: 15px; }
  .tab.active { background: #fff; color: #000; border: 1px solid #000; border-width: 0 2px 2px 1px; border-top: 0; height: 18px; margin-top: 0; line-height: 19px; margin-left: -1px; }
  .tarrows { position: absolute; right: 10px; top: 0; height: 20px; padding-left: 6px; background: #f0f0f0; display: flex; align-items: center; gap: 13px; }

  .status { height: 22px; flex: none; background: #f0f0f0; display: flex; align-items: center; font-size: 12px; }
  .cell { height: 18px; line-height: 18px; box-sizing: border-box; padding-left: 3px; border-right: 1px solid #a0a0a0; white-space: nowrap; color: #111; }
  .cell:nth-child(2) { padding-left: 5px; }
  .net { display: flex; align-items: center; gap: 5px; margin-left: 5px; color: #111; }
</style>
